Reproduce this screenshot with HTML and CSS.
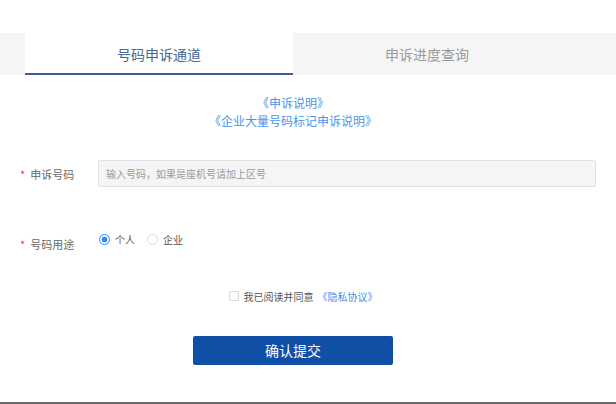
FILE: index.html
```html
<!DOCTYPE html>
<html lang="zh-CN">
<head>
<meta charset="utf-8">
<title>号码申诉通道</title>
<link rel="stylesheet" href="styles.css">
</head>
<body>
<div class="page">
  <div class="top-space"></div>
  <div class="tabbar">
    <div class="tabs">
      <div class="tab active">号码申诉通道</div>
      <div class="tab">申诉进度查询</div>
    </div>
  </div>
  <div class="notes">
    <a class="note-link">《申诉说明》</a>
    <a class="note-link">《企业大量号码标记申诉说明》</a>
  </div>
  <div class="row row-phone">
    <div class="label"><span class="star">*</span>申诉号码</div>
    <div class="input">输入号码，如果是座机号请加上区号</div>
  </div>
  <div class="row row-use">
    <div class="label label-low"><span class="star">*</span>号码用途</div>
    <div class="radios">
      <span class="radio checked"></span><span class="radio-text">个人</span>
      <span class="radio"></span><span class="radio-text">企业</span>
    </div>
  </div>
  <div class="center agree">
    <span class="checkbox"></span>
    <span class="agree-text">我已阅读并同意</span>
    <a class="agree-link">《隐私协议》</a>
  </div>
  <div class="center submit-wrap">
    <div class="submit">确认提交</div>
  </div>
  <div class="spacer"></div>
  <div class="footer-line"></div>
</div>
</body>
</html>
```
FILE: styles.css
```css
* { box-sizing: border-box; }
html, body { margin: 0; padding: 0; }
body {
  font-family: "Noto Sans CJK SC", "Noto Sans", sans-serif;
  background: #fff;
  color: #666;
}
.page {
  display: flex;
  flex-direction: column;
  height: 100vh;
}
.top-space { height: 33px; flex: none; }
.tabbar {
  background: #f5f5f5;
  padding-left: 25px;
  height: 42px;
  flex: none;
}
.tabs {
  width: 536px;
  display: flex;
  height: 42px;
}
.tab {
  flex: 1;
  text-align: center;
  font-size: 14px;
  line-height: 42px;
  color: #9a9a9a;
}
.tab.active {
  background: #fff;
  color: #4a6595;
  border-bottom: 2px solid #3d5c9c;
  line-height: 42px;
}
.notes {
  width: 536px;
  margin-left: 25px;
  margin-top: 19px;
  text-align: center;
  font-size: 12px;
  line-height: 18px;
}
.note-link {
  display: block;
  color: #4a94ec;
}
.row {
  display: flex;
  padding-left: 20px;
}
.row-phone {
  margin-top: 30px;
  align-items: center;
}
.label {
  width: 78px;
  font-size: 11px;
  color: #6a6a6a;
  line-height: 16px;
}
.star {
  color: #e0474c;
  margin-right: 5px;
}
.input {
  width: 498px;
  height: 27px;
  background: #f5f5f5;
  border: 1px solid #e2e2e2;
  border-radius: 2px;
  font-size: 10px;
  line-height: 25px;
  color: #9a9a9a;
  padding-left: 7px;
}
.row-use {
  margin-top: 45px;
  align-items: flex-start;
}
.label-low { margin-top: 4px; }
.radios {
  display: flex;
  align-items: center;
  height: 14px;
  padding-left: 1px;
}
.radio {
  width: 11px;
  height: 11px;
  border: 1px solid #dcdcdc;
  border-radius: 50%;
  background: #fff;
  flex: none;
}
.radio.checked {
  border-color: #2d8cf0;
  background: radial-gradient(circle, #2d8cf0 0 2.6px, #fff 3.2px);
}
.radio-text {
  font-size: 10px;
  color: #555;
  margin-left: 5px;
  margin-right: 12px;
}
.center {
  width: 536px;
  margin-left: 25px;
  display: flex;
  justify-content: center;
  align-items: center;
}
.agree {
  margin-top: 37px;
  height: 14px;
  padding-left: 20px;
}
.checkbox {
  width: 10px;
  height: 10px;
  border: 1px solid #d8d8d8;
  border-radius: 1px;
  margin-right: 5px;
}
.agree-text {
  font-size: 10px;
  color: #555;
  margin-right: 4px;
}
.agree-link {
  font-size: 10px;
  color: #4a8ee8;
}
.submit-wrap { margin-top: 33px; }
.submit {
  width: 200px;
  height: 29px;
  background: #0f50a6;
  border-radius: 2px;
  color: #fff;
  text-align: center;
  font-size: 14px;
  line-height: 29px;
}
.spacer { flex: 1; }
.footer-line {
  height: 2px;
  background: #6a6a6a;
  flex: none;
}
```
